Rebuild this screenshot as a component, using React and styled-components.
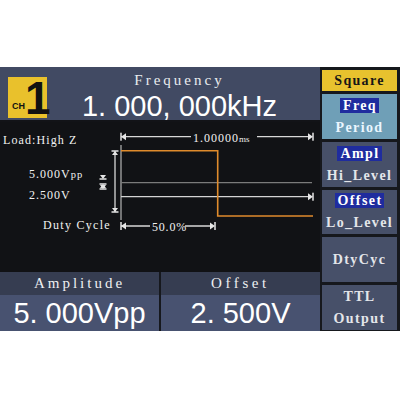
import React from 'react';
import styled, { createGlobalStyle } from 'styled-components';

const Global = createGlobalStyle`
  html, body { margin: 0; padding: 0; background: #ffffff; }
  body { font-family: "Liberation Sans", Arial, sans-serif; }
`;

const SERIF = '"Liberation Serif", "DejaVu Serif", serif';

const Device = styled.div`
  margin-top: 67px;
  width: 400px;
  height: 264px;
  display: flex;
  background: #16181d;
`;

const Main = styled.div`
  width: 320px;
  display: flex;
  flex-direction: column;
`;

const Header = styled.div`
  height: 53px;
  flex: none;
  display: flex;
  align-items: flex-start;
  padding-left: 8px;
  background: #414a63;
  border-bottom: 2px solid #121317;
`;

const Badge = styled.div`
  width: 39px;
  height: 41px;
  margin-top: 10px;
  flex: none;
  box-sizing: border-box;
  display: flex;
  align-items: flex-end;
  padding: 0 0 3px 4px;
  background: #e9c12c;
  color: #111;
  font-weight: 700;
`;

const BadgeSmall = styled.span`
  font-size: 9px;
  line-height: 9px;
  margin-bottom: 4px;
`;

const BadgeNum = styled.span`
  font-size: 46px;
  line-height: 34px;
  margin-left: 0;
`;

const Readout = styled.div`
  flex: 1;
  display: flex;
  flex-direction: column;
  align-items: center;
  padding: 4px 8px 0 0;
`;

const Caption = styled.div`
  font-family: ${SERIF};
  font-size: 15px;
  line-height: 18px;
  letter-spacing: 3px;
  color: #e9ecef;
`;

const BigValue = styled.div`
  margin-top: 2px;
  font-size: 29px;
  line-height: 30px;
  color: #ffffff;
  white-space: pre;
`;

const Screen = styled.div`
  height: 148px;
  flex: none;
  background: #111215;
`;

const Bottom = styled.div`
  flex: 1;
  display: flex;
  padding-top: 2px;
  background: #111215;
`;

const Field = styled.div`
  display: flex;
  flex-direction: column;
  width: ${p => p.$w};
  flex: ${p => (p.$grow ? 1 : 'none')};
  border-right: ${p => (p.$split ? '2px solid #16181d' : 'none')};
`;

const FieldLabel = styled.div`
  height: 23px;
  display: flex;
  align-items: center;
  justify-content: center;
  background: #363d51;
  font-family: ${SERIF};
  font-size: 15px;
  letter-spacing: ${p => p.$ls || '3px'};
  color: #eef0f2;
`;

const FieldValue = styled.div`
  flex: 1;
  display: flex;
  align-items: center;
  justify-content: center;
  background: #485270;
  font-size: 29px;
  color: #ffffff;
  white-space: pre;
`;

const Menu = styled.div`
  flex: 1;
  display: flex;
  flex-direction: column;
  gap: 3px;
  padding: 3px 3px 1px 2px;
`;

const MenuTitle = styled.div`
  height: 21px;
  flex: none;
  display: flex;
  align-items: center;
  justify-content: center;
  background: #e8c22e;
  color: #161616;
  font-family: ${SERIF};
  font-weight: 700;
  font-size: 14px;
  letter-spacing: 1.3px;
`;

const MenuButton = styled.div`
  flex: 1;
  display: flex;
  flex-direction: column;
  align-items: center;
  justify-content: center;
  gap: 7px;
  background: ${p => (p.$active ? '#6f9fb7' : '#475069')};
  color: ${p => (p.$active ? '#eaf6ff' : '#e4e6ea')};
  font-family: ${SERIF};
  font-weight: 700;
  font-size: 14px;
  line-height: 15px;
  letter-spacing: 1.4px;
`;

const Chip = styled.span`
  padding: 0 2px 0 3px;
  background: ${p => (p.$on ? '#1f2c9e' : 'transparent')};
  color: #ffffff;
`;

/* span markers used by the waveform diagram */
const HMark = ({ x, y, dir }) => {
  // vertical bar with a small arrowhead pointing at it
  const s = dir === 'left' ? 1 : -1;
  return (
    <g fill="#e6e6e6" stroke="none">
      <rect x={x - 0.75} y={y - 4} width="1.5" height="8" />
      <path d={`M${x} ${y} L${x + 5 * s} ${y - 3.5} L${x + 5 * s} ${y + 3.5} Z`} />
    </g>
  );
};

const VMark = ({ x, y, dir }) => {
  const s = dir === 'up' ? 1 : -1;
  return (
    <g fill="#e6e6e6" stroke="none">
      <rect x={x - 3.5} y={y - 0.75} width="7" height="1.5" />
      <path d={`M${x} ${y} L${x - 3} ${y + 4 * s} L${x + 3} ${y + 4 * s} Z`} />
    </g>
  );
};

const Waveform = () => (
  <svg width="320" height="148" viewBox="0 0 320 148" style={{ display: 'block' }}>
    <g fontFamily={SERIF} fontSize="12" fill="#f2f2f2" letterSpacing="1.1">
      <text x="3" y="22">Load:High Z</text>
    </g>

    {/* period span */}
    <line x1="121" y1="14.7" x2="310" y2="14.7" stroke="#d8d8d8" strokeWidth="1.3" />
    <HMark x={121} y={14.7} dir="left" />
    <HMark x={313} y={14.7} dir="right" />
    <rect x="191" y="9" width="66" height="12" fill="#111215" />
    <text x="193" y="19.5" fontFamily={SERIF} fontSize="12" fill="#f2f2f2" letterSpacing="1">
      1.00000<tspan fontSize="9" letterSpacing="0">ms</tspan>
    </text>

    {/* reference lines */}
    <line x1="121" y1="23" x2="121" y2="98" stroke="#a9a9a9" strokeWidth="1.3" />
    <line x1="121" y1="60.7" x2="312" y2="60.7" stroke="#7b7b7b" strokeWidth="1.3" />
    <line x1="121" y1="74.7" x2="310" y2="74.7" stroke="#d4d4d4" strokeWidth="1.3" />
    <HMark x={313} y={74.7} dir="right" />

    {/* square wave */}
    <path d="M121 28.7 H217.7 V94 H313" fill="none" stroke="#e08b2c" strokeWidth="1.6" />

    {/* amplitude span */}
    <line x1="115" y1="29" x2="115" y2="90" stroke="#d8d8d8" strokeWidth="1.3" />
    <VMark x={115} y={29} dir="up" />
    <VMark x={115} y={90} dir="down" />

    {/* offset marker */}
    <VMark x={103} y={57} dir="down" />
    <VMark x={103} y={62} dir="up" />
    <VMark x={103} y={67} dir="down" />

    <g fontFamily={SERIF} fontSize="12" fill="#f2f2f2" letterSpacing="1">
      <text x="29" y="56">5.000V<tspan fontSize="10.5">pp</tspan></text>
      <text x="29" y="77">2.500V</text>
      <text x="43" y="107" letterSpacing="1.3">Duty Cycle</text>
    </g>

    {/* duty cycle span */}
    <line x1="121" y1="104" x2="212" y2="104" stroke="#d8d8d8" strokeWidth="1.3" />
    <HMark x={121} y={104} dir="left" />
    <HMark x={215} y={104} dir="right" />
    <rect x="150" y="98" width="35" height="12" fill="#111215" />
    <text x="152" y="108.5" fontFamily={SERIF} fontSize="12" fill="#f2f2f2" letterSpacing="0.8">50.0%</text>
  </svg>
);

export default function App() {
  return (
    <>
      <Global />
      <Device>
        <Main>
          <Header>
            <Badge>
              <BadgeSmall>CH</BadgeSmall>
              <BadgeNum>1</BadgeNum>
            </Badge>
            <Readout>
              <Caption>Frequency</Caption>
              <BigValue>1. 000, 000kHz</BigValue>
            </Readout>
          </Header>
          <Screen>
            <Waveform />
          </Screen>
          <Bottom>
            <Field $w="159px" $split>
              <FieldLabel>Amplitude</FieldLabel>
              <FieldValue>5. 000Vpp</FieldValue>
            </Field>
            <Field $grow>
              <FieldLabel $ls="3.6px">Offset</FieldLabel>
              <FieldValue>2. 500V</FieldValue>
            </Field>
          </Bottom>
        </Main>
        <Menu>
          <MenuTitle>Square</MenuTitle>
          <MenuButton $active>
            <Chip $on>Freq</Chip>
            <span>Period</span>
          </MenuButton>
          <MenuButton>
            <Chip $on>Ampl</Chip>
            <span>Hi_Level</span>
          </MenuButton>
          <MenuButton>
            <Chip $on>Offset</Chip>
            <span>Lo_Level</span>
          </MenuButton>
          <MenuButton>
            <span>DtyCyc</span>
          </MenuButton>
          <MenuButton>
            <span>TTL</span>
            <span>Output</span>
          </MenuButton>
        </Menu>
      </Device>
    </>
  );
}
